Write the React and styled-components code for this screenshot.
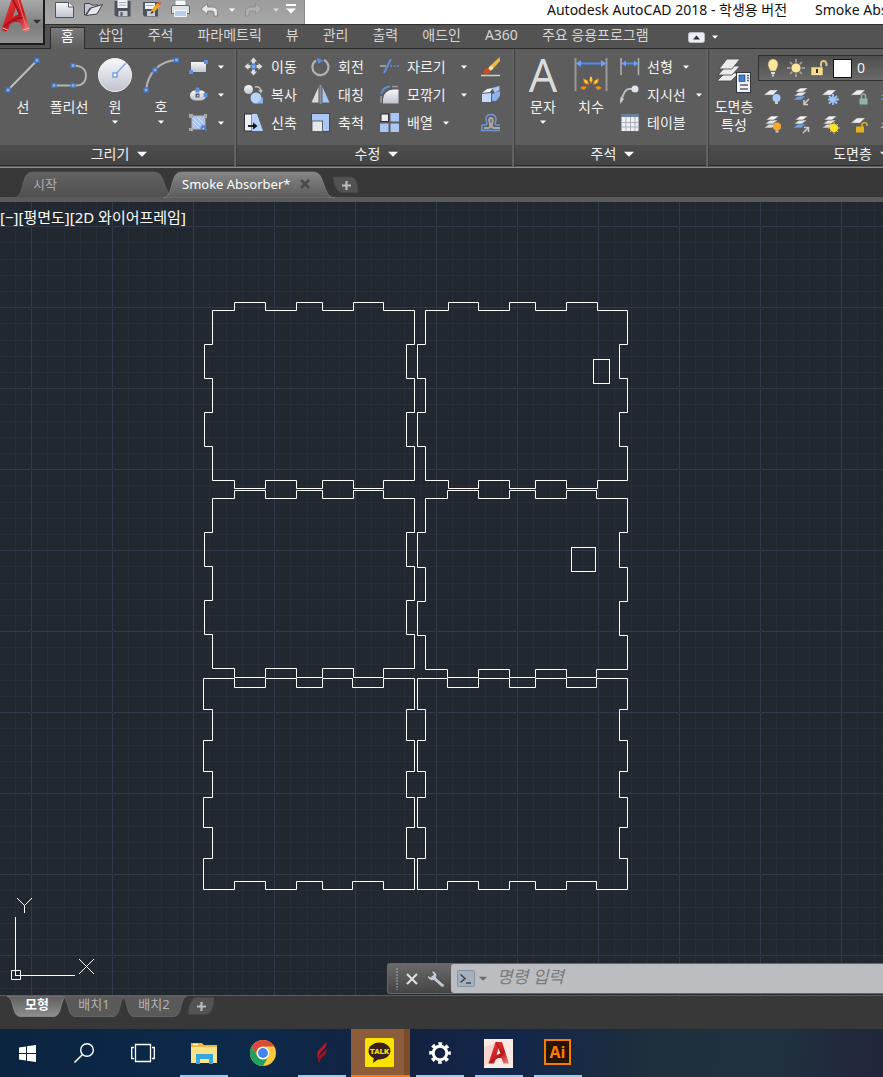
import React from "react";
import styled, { createGlobalStyle, css } from "styled-components";

const GlobalStyle = createGlobalStyle`
  *, *::before, *::after { box-sizing: border-box; }
  body {
    margin: 0;
    background: #383838;
    font-family: "Noto Sans", "Noto Sans CJK KR", sans-serif;
    font-size: 14px;
    line-height: 18px;
    color: #f2f2f2;
  }
  button, input, select { font: inherit; color: inherit; margin: 0; }
  button { border: 0; padding: 0; background: none; white-space: nowrap; }
  svg { display: block; flex: none; }
`;

const App = styled.div`
  display: flex;
  flex-direction: column;
  min-height: 100vh;
  overflow: hidden;
`;

/* ---------- header ---------- */

const Header = styled.header`
  display: flex;
  align-items: flex-start;
  height: 49px;
  background: #535353;
  border-bottom: 1px solid #2b2b2b;
`;

const AppButton = styled.button`
  flex: none;
  display: flex;
  align-items: center;
  width: 45px;
  height: 45px;
  background: linear-gradient(#a9a9a9, #7d7d7d 60%, #929292);
  border: solid #1c1c1c;
  border-width: 0 2px 2px 0;
`;

const HeaderMain = styled.div`
  flex: 1;
  min-width: 0;
`;

const TitleBar = styled.div`
  display: flex;
  height: 25px;
  background: #fff;
  border-bottom: 1px solid #2f2f2f;
  overflow: hidden;
`;

const QuickAccess = styled.div`
  flex: none;
  display: flex;
  align-items: flex-start;
  width: 260px;
  padding-left: 10px;
  gap: 9px;
  background: linear-gradient(#9c9c9c, #a8a8a8);
  border-right: 1px solid #8a8a8a;
`;

const QuickButton = styled.button`
  width: ${(p) => (p.$narrow ? 6 : 20)}px;
  height: 20px;
  display: flex;
  align-items: center;
  justify-content: center;
`;

const Caption = styled.h1`
  display: flex;
  gap: 28px;
  margin: 0;
  padding-left: 242px;
  font-size: 14px;
  font-weight: 400;
  line-height: 20px;
  color: #111;
  white-space: nowrap;
`;

const RibbonTabs = styled.nav`
  display: flex;
  align-items: flex-start;
  height: 24px;
  padding: 2px 0 0 5px;
`;

const RibbonTab = styled.button`
  height: 22px;
  padding: 0 12px 7px;
  line-height: 15px;
  color: #d6d6d6;
  ${(p) =>
    p.$active &&
    css`
      padding: 0 10px 7px;
      margin-right: 1px;
      color: #fff;
      background: linear-gradient(#7b7b7b, #5d5d5d);
      border: solid #2b2b2b;
      border-width: 1px 1px 0;
    `}
`;

const RibbonToggle = styled.button`
  display: flex;
  align-items: center;
  gap: 7px;
  height: 20px;
  margin-left: 27px;
`;

/* ---------- ribbon ---------- */

const Ribbon = styled.div`
  display: flex;
  height: 119px;
  background: #5d5d5d;
  border-bottom: 1px solid #8b8b8b;
  overflow: hidden;
`;

const Panel = styled.section`
  flex: none;
  display: flex;
  flex-direction: column;
  width: ${(p) => p.$width}px;
  border-right: 1px solid #3c3c3c;
  box-shadow: inset -1px 0 #6b6b6b;
`;

const PanelBody = styled.div`
  display: flex;
  height: 96px;
  padding: 4px 0 0 ${(p) => p.$inset || 0}px;
`;

const PanelTitle = styled.button`
  display: flex;
  align-items: center;
  justify-content: center;
  gap: 8px;
  height: 21px;
  margin-right: 2px;
  padding: 0 0 2px 4px;
  background: linear-gradient(#4d4d4d, #434343);
  border-bottom: 1px solid #2c2c2c;
`;

const BigTool = styled.button`
  display: flex;
  flex-direction: column;
  align-items: center;
  width: ${(p) => p.$width || 46}px;
  height: 88px;
  padding-top: 4px;
  line-height: 18px;
`;

const BigIcon = styled.span`
  height: 41px;
`;

const BigLetter = styled.span`
  display: block;
  font-family: "Open Sans", sans-serif;
  font-size: 45px;
  line-height: 35px;
  color: #dcdcdc;
`;

const BigArrow = styled.span`
  margin-top: 4px;
`;

const ToolColumn = styled.div`
  flex: none;
  width: ${(p) => p.$width || 60}px;
  margin-left: ${(p) => p.$gap || 0}px;
`;

const Tool = styled.button`
  display: flex;
  align-items: center;
  height: ${(p) => p.$height || 28}px;
`;

const ToolLabel = styled.span`
  min-width: ${(p) => (p.$wide ? 44 : 26)}px;
  margin: 0 10px 0 7px;
  text-align: left;
`;

const ArrowGap = styled.span`
  padding-left: 9px;
`;

const LayerArea = styled.div`
  padding-top: 2px;
`;

const LayerCombo = styled.div`
  display: flex;
  align-items: center;
  gap: 5px;
  width: 210px;
  height: 26px;
  padding-left: 5px;
  background: linear-gradient(#4e4e4e, #6a6a6a);
  border: 1px solid #303030;
`;

const Swatch = styled.span`
  width: 19px;
  height: 19px;
  background: #fff;
  border: 1px solid #111;
`;

const LayerSelect = styled.select`
  flex: 1;
  appearance: none;
  background: none;
  border: 0;
  padding: 0;
`;

const LayerRow = styled.div`
  display: flex;
  gap: 9px;
  height: 28px;
  align-items: center;
  padding: 3px 0 0 5px;
`;

/* ---------- file tabs ---------- */

const FileTabs = styled.nav`
  display: flex;
  height: 34px;
  padding: 3px 0 0 14px;
  background: #383838;
  border-bottom: 5px solid #5b5b5b;
`;

const FileTab = styled.button`
  position: relative;
  display: flex;
  align-items: center;
  width: ${(p) => p.$width}px;
  height: 27px;
  margin-right: -13px;
  padding: 0 0 1px 19px;
  gap: 10px;
  font-size: 13px;
  color: ${(p) => (p.$active ? "#fff" : "#ababab")};
`;

const Shape = styled.svg`
  position: absolute;
  inset: 0;
  width: 100%;
  height: 100%;
`;

const Front = styled.span`
  position: relative;
`;

const AddTab = styled.button`
  display: flex;
  align-self: flex-start;
  margin: ${(p) => p.$margin};
`;

/* ---------- drawing area ---------- */

const Viewport = styled.main`
  position: relative;
  flex: 1;
  min-height: 700px;
  background: #212830;
  overflow: hidden;
`;

const Drawing = styled.svg`
  position: absolute;
  inset: 0;
  width: 100%;
  height: 100%;
`;

const ViewLabel = styled.div`
  position: relative;
  display: flex;
  padding-top: 6px;
  font-size: 15px;
  color: #fff;
  white-space: nowrap;
`;

const ViewControl = styled.button`
  height: 18px;
  line-height: 18px;
`;

const Ucs = styled.svg`
  position: absolute;
  left: 0;
  bottom: 14px;
`;

const CommandBar = styled.form`
  position: absolute;
  left: 387px;
  right: 0;
  bottom: 1px;
  display: flex;
  height: 31px;
  border: 1px solid #66686a;
  border-right: 0;
  border-radius: 3px 0 0 3px;
  background: linear-gradient(#6a6a6a, #444);
`;

const CommandHandle = styled.div`
  flex: none;
  display: flex;
  align-items: center;
  gap: 4px;
  width: 63px;
  padding-left: 8px;
`;

const CommandBody = styled.div`
  flex: 1;
  display: flex;
  align-items: center;
  padding-left: 6px;
  background: #bcbdc0;
  border-radius: 3px 0 0 3px;
`;

const CommandMenu = styled.button`
  display: flex;
  align-items: center;
  gap: 4px;
`;

const CommandInput = styled.input`
  flex: 1;
  min-width: 0;
  height: 26px;
  margin-left: 10px;
  padding: 0 0 4px;
  border: 0;
  background: none;
  font-size: 17px;
  font-style: italic;
  color: #222;
  &::placeholder { color: #7a7a7c; opacity: 1; }
`;

/* ---------- layout tabs ---------- */

const LayoutTabs = styled.nav`
  display: flex;
  height: 34px;
  padding-left: 7px;
  background: #383838;
  border-top: 1px solid #5e5e5e;
`;

const LayoutTab = styled.button`
  position: relative;
  width: ${(p) => p.$width}px;
  height: 21px;
  margin-right: -5px;
  padding-bottom: 4px;
  line-height: 17px;
  font-size: 13px;
  font-weight: ${(p) => (p.$active ? 700 : 400)};
  color: ${(p) => (p.$active ? "#fff" : "#b4b4b4")};
`;

/* ---------- taskbar ---------- */

const Taskbar = styled.footer`
  display: flex;
  height: 48px;
  background: linear-gradient(100deg, #0b2440 0%, #0c2a4b 28%, #14213f 45%, #12264a 58%, #1f2f3c 74%, #20303f 88%, #22253a 100%);
`;

const TaskButton = styled.button`
  display: flex;
  align-items: center;
  justify-content: center;
  width: ${(p) => p.$width || 59}px;
  height: 48px;
  margin-left: ${(p) => p.$gap || 0}px;
  ${(p) =>
    p.$running &&
    css`
      background: linear-gradient(#9ccbf2, #9ccbf2) center bottom / 48px 2px no-repeat;
    `}
  ${(p) =>
    p.$alert &&
    css`
      background: linear-gradient(90deg, #8d5d3b 53px, #7b4b2a 53px);
      border-bottom: 2px solid #ff7a0a;
      padding-right: 2px;
    `}
`;

/* ---------- glyphs ---------- */

const Caret = ({ w = 6, fill = "#fff" }) => (
  <svg width={w} height={w / 2 + 1} viewBox="0 0 6 4" preserveAspectRatio="none" aria-hidden="true">
    <path d="M0 .5H6L3 3.8Z" fill={fill} />
  </svg>
);

const Svg = ({ w = 20, h = 20, children }) => (
  <svg width={w} height={h} viewBox={`0 0 ${w} ${h}`} fill="none" aria-hidden="true">
    {children}
  </svg>
);

const Grip = ({ x, y, s = 4 }) => (
  <rect x={x - s / 2} y={y - s / 2} width={s} height={s} fill="#8fb0e8" stroke="#3f74c4" strokeWidth="1.4" />
);

const Defs = () => (
  <svg width="0" height="0" style={{ position: "absolute" }} aria-hidden="true">
    <defs>
      <linearGradient id="silver" x1="0" y1="0" x2="0" y2="1">
        <stop offset="0" stopColor="#f8f8fa" />
        <stop offset="1" stopColor="#bfc3cf" />
      </linearGradient>
      <linearGradient id="red" x1="0" y1="0" x2="1" y2="1">
        <stop offset="0" stopColor="#ee4444" />
        <stop offset=".6" stopColor="#c4161f" />
        <stop offset="1" stopColor="#e98a84" />
      </linearGradient>
      <linearGradient id="tabOn" x1="0" y1="0" x2="0" y2="1">
        <stop offset="0" stopColor="#868686" />
        <stop offset="1" stopColor="#5b5b5b" />
      </linearGradient>
      <linearGradient id="tabOff" x1="0" y1="0" x2="0" y2="1">
        <stop offset="0" stopColor="#626262" />
        <stop offset="1" stopColor="#505050" />
      </linearGradient>
      <linearGradient id="tabOnDown" x1="0" y1="0" x2="0" y2="1">
        <stop offset="0" stopColor="#5e5e5e" />
        <stop offset="1" stopColor="#8e8e8e" />
      </linearGradient>
    </defs>
  </svg>
);

const AutocadLogo = () => (
  <Svg w={33} h={44}>
    <path d="M12 -2H20L29.500 28C30 31.500 24 32.500 22.500 30L20 23C16 21 12 22 9.500 25L8 30C7 32.500 1.500 31.500 2 28Z" fill="url(#red)" />
    <path d="M16 7L18.500 14.500C16 15 13.500 16 12.500 18Z" fill="#8e8b8c" />
    <path d="M13 0L20 15M4 27C10 20 18 17 24 18" stroke="#9d1016" strokeWidth="1.500" />
    <path d="M18 0L26.500 28" stroke="#f4766f" />
    <path d="M2.500 28L8 30M23 30L29 28" stroke="#f3b4ae" />
  </Svg>
);

/* quick access icons */
const NewIcon = () => (
  <Svg><path d="M.5 2.500H14L18.500 7V17.500H.5Z" fill="url(#silver)" stroke="#50535a" /><path d="M13.500 2.500V7H18.500" fill="#fff" stroke="#50535a" /></Svg>
);
const OpenIcon = () => (
  <Svg><path d="M.5 15V3.500H6L8 5H14V8H6L1.500 15Z" fill="#c2c6ce" stroke="#3f434b" /><path d="M7 8L18.500 4.500L13 14L2 15.500Z" fill="#e4e8ee" stroke="#3f434b" /></Svg>
);
const SaveIcon = () => (
  <Svg><path d="M1.500 1H17.500V16.500H3L1.500 15Z" fill="#4d535e" /><path d="M4.500 0H14.500V8H4.500Z" fill="#eef1f5" /><path d="M6 2.500H13M6 5H13" stroke="#a4a9b2" /><path d="M5.500 11H14.500V16H5.500Z" fill="#c8ccd4" /><path d="M7.500 12H9.500V16H7.500Z" fill="#4d535e" /></Svg>
);
const SaveAsIcon = () => (
  <Svg><path d="M1 2H16V16.500H2.500L1 15Z" fill="#4d535e" /><path d="M3 3H13V9H3Z" fill="#eef1f5" /><path d="M4 5.500H12" stroke="#a4a9b2" /><path d="M5 11H13V16H5Z" fill="#c8ccd4" /><path d="M10 12L17 4" stroke="#f2a81d" strokeWidth="3.500" /><path d="M16.500 4.500L18.500 2" stroke="#e4604a" strokeWidth="3" /><path d="M8.500 14L10 11L11.500 12.500Z" fill="#222" /></Svg>
);
const PrintIcon = () => (
  <Svg><path d="M4 0H15V7H4Z" fill="#f6f7f9" stroke="#8c9099" /><path d="M.5 7Q.5 5.500 2 5.500H17Q18.500 5.500 18.500 7V13.500H.5Z" fill="#dfe2e8" stroke="#63676f" /><path d="M3.500 10.500H15.500V16.500H3.500Z" fill="#b7cef0" stroke="#f4f6f8" /></Svg>
);
const UndoIcon = () => (
  <Svg><path d="M1 9L7.500 3.500V7H12Q17.500 7 17.500 12V16H14V13Q14 11 12 11H7.500V14.500Z" fill="#e6e6e6" stroke="#777" strokeWidth=".8" /></Svg>
);
const RedoIcon = () => (
  <Svg><path d="M18 9L11.500 3.500V7H7Q1.500 7 1.500 12V16H5V13Q5 11 7 11H11.500V14.500Z" fill="#b0b0b0" stroke="#8a8a8a" strokeWidth=".8" /></Svg>
);
const CustomizeIcon = () => (
  <Svg w={10} h={14}><path d="M0 2H10" stroke="#fff" strokeWidth="2" /><path d="M0 5.500H10L5 10.500Z" fill="#fff" /></Svg>
);
const ToggleIcon = () => (
  <Svg w={17} h={11}><rect x=".5" y=".5" width="16" height="10" rx="2" fill="#eceef2" stroke="#b9bcc4" /><path d="M5 7.500L8.500 3.500L12 7.500Z" fill="#2e3036" /></Svg>
);

/* draw panel icons */
const LineIcon = () => (
  <Svg w={36} h={36}><path d="M3 33L32 3.500" stroke="#bdbdbd" strokeWidth="2" /><Grip x={3} y={33} /><Grip x={32} y={3.500} /></Svg>
);
const PolylineIcon = () => (
  <Svg w={36} h={36}><path d="M3 28.500H25C32 28.500 35 24 35 18.500S31 8.500 22 8.500" stroke="#b4b4b4" strokeWidth="2" /><Grip x={3} y={28.500} /><Grip x={22} y={28.500} /><Grip x={22} y={8.500} /></Svg>
);
const CircleIcon = () => (
  <Svg w={36} h={36}><circle cx="18" cy="18" r="16.500" fill="url(#silver)" stroke="#eceef2" /><path d="M18 18L29 6" stroke="#80acf0" strokeWidth="1.600" /><rect x="16" y="16" width="4" height="4" fill="#fff" stroke="#6f9fea" strokeWidth="1.400" /></Svg>
);
const ArcIcon = () => (
  <Svg w={36} h={36}><path d="M3 33C5 16 16 4 34 3" stroke="#b4b4b4" strokeWidth="2" /><Grip x={3} y={33} /><Grip x={12} y={13} /><Grip x={33.500} y={3} /></Svg>
);
const RectIcon = () => (
  <Svg><rect x="2" y="5" width="15" height="10" fill="url(#silver)" /><rect x="0" y="13" width="4" height="4" fill="#5c8fdf" /><rect x="15" y="3" width="4" height="4" fill="#5c8fdf" /></Svg>
);
const EllipseIcon = () => (
  <Svg><rect x="1" y="5.500" width="16" height="10" rx="5" fill="url(#silver)" /><rect x="6.500" y="2.500" width="4" height="5" fill="#5c8fdf" /><rect x="14.500" y="8" width="4" height="4" fill="#5c8fdf" /><rect x="6.500" y="8.500" width="4" height="4" fill="#5a5d65" /><rect x="8" y="10" width="1.500" height="1.500" fill="#cfd3da" /></Svg>
);
const HatchIcon = () => (
  <Svg><rect x="3" y="3" width="13" height="13" fill="#a9c4f2" stroke="#b8b8b8" /><path d="M4 9L10 15M4 5L15 16M8 4L16 12" stroke="#d3e1f9" /><path d="M0 1H4V5H0ZM15 1H18V5H15ZM0 15H4V18H0Z" fill="#a9a9a9" /><path d="M11 17L16 12M13 12L17.500 17.500M11.500 14H17" stroke="#4f88dd" strokeWidth="1.500" /></Svg>
);

/* modify panel icons */
const MoveIcon = () => (
  <Svg><path d="M9.500 .5L13 4.500H11V6.500H8V4.500H6ZM9.500 18.500L13 14.500H11V12.500H8V14.500H6ZM.5 9.500L4.500 6V8H6.500V11H4.500V13ZM18.500 9.500L14.500 6V8H12.500V11H14.500V13Z" fill="#dcdcde" /><rect x="7.500" y="7.500" width="4" height="4" fill="#7fa9ea" stroke="#4a80d2" /></Svg>
);
const RotateIcon = () => (
  <Svg><path d="M5 3.500A8 8 0 1 0 13 3" stroke="#b0b2b6" strokeWidth="2.200" /><path d="M6 .5L12 3.500L7 7Z" fill="#5c8fdf" /></Svg>
);
const TrimIcon = () => (
  <Svg><path d="M0 9H6" stroke="#9a9a9a" strokeWidth="2" /><path d="M4 16L11 2" stroke="#5c8fdf" strokeWidth="2" /><path d="M10 9H19" stroke="#5c8fdf" strokeDasharray="2 1.500" strokeWidth="1.500" /></Svg>
);
const EraseIcon = () => (
  <Svg><path d="M18.500 0L8 10L11 13L19 4Z" fill="#e9b949" /><path d="M10 8.500L7 11.500L9.500 14L12.500 11Z" fill="#f3e3b0" /><path d="M2 17Q3 10.500 7 11L9.500 14Q8 18 2 17Z" fill="#d2491b" /><path d="M0 18.500H19" stroke="#cfcfcf" strokeWidth="1.500" /></Svg>
);
const CopyIcon = () => (
  <Svg><circle cx="4.500" cy="4.500" r="4.500" fill="url(#silver)" /><circle cx="12" cy="13" r="5.500" fill="#b9d2f8" /><path d="M13 18.500H19V12Z" fill="#8cb2ee" /><path d="M11 2Q16 1 17 6" stroke="#bcbcbc" strokeWidth="1.500" /><path d="M14 5H19L17 8.500Z" fill="#bcbcbc" /></Svg>
);
const MirrorIcon = () => (
  <Svg><path d="M7.500 2V17.500H.5Z" fill="#d9dadd" /><path d="M11.500 2V17.500H18.500Z" fill="#a8c8f4" /><path d="M9.500 0V19" stroke="#8e9095" strokeWidth="2" /></Svg>
);
const FilletIcon = () => (
  <Svg><path d="M3 18.500V14Q4 5 14 4.500H18.500V18.500Z" fill="url(#silver)" /><path d="M1 9Q3 2 10 1.500" stroke="#5c8fdf" strokeWidth="2" /><path d="M1 11V18M12 1.500H18" stroke="#9a9a9a" strokeWidth="1.500" /></Svg>
);
const ExplodeIcon = () => (
  <Svg><path d="M1 9L10 8V17H1Z" fill="#c4d9fa" /><path d="M1 8L6 4L12 3L9 7Z" fill="#eef3fb" /><path d="M11 3L18.500 1V5L14 8Z" fill="#a8c6f3" /><path d="M11 9L19 6V11L15 16H11Z" fill="#8cb2ee" /></Svg>
);
const StretchIcon = () => (
  <Svg><path d="M.5 1H8V18H.5Z" fill="#eef0f4" stroke="#2d3138" /><path d="M8 1H13L19 18H8Z" fill="#b6d2fa" /><path d="M4 13H10" stroke="#111" strokeWidth="1.800" /><path d="M9 9.500L13.500 13L9 16.500Z" fill="#111" /></Svg>
);
const ScaleIcon = () => (
  <Svg><rect x=".5" y=".5" width="18" height="18" fill="#a9c6f4" stroke="#3d4a66" /><rect x="1" y="8" width="10.500" height="10.500" fill="#e6e8ec" stroke="#5a616d" /></Svg>
);
const ArrayIcon = () => (
  <Svg><rect x="1" y="1" width="7.500" height="7.500" fill="#eceef2" stroke="#333" /><rect x="10.500" y="0" width="8.500" height="8.500" fill="#a9c6f4" /><rect x="0" y="10.500" width="8.500" height="8.500" fill="#a9c6f4" /><rect x="10.500" y="10.500" width="8.500" height="8.500" fill="#a9c6f4" /></Svg>
);
const OffsetIcon = () => (
  <Svg><path d="M1 12H4Q7 12 5.500 9Q3.500 1.500 10 1.500T14.500 9Q13 12 16 12H19" stroke="#6f97d8" strokeWidth="1.500" /><path d="M.800 12V17.500H19" stroke="#6f97d8" strokeWidth="1.500" /><path d="M3 15H7Q10 15 9 11Q7 5 10 5T11 11Q10 15 13 15H19" stroke="#a9a9a9" strokeWidth="2" /></Svg>
);

/* annotation icons */
const DimensionIcon = () => (
  <Svg w={36} h={36}>
    <path d="M2.500 1V34M33.500 1V34" stroke="#999" strokeWidth="2" />
    <path d="M4 6.500H32" stroke="#4b8df2" strokeWidth="2" />
    <path d="M3 6.500L8 3V10ZM33 6.500L28 3V10Z" fill="#6aa2f8" />
    <g fill="#f08c14">
      <path d="M18 19L20 23L18 27L16 23ZM10 21L15 24L16 28L11 26ZM26 21L21 24L20 28L25 26ZM7 31L10 29L14 30L11 33ZM29 31L26 29L22 30L25 33Z" />
    </g>
    <path d="M18 20V24M12 23L14 26M24 23L22 26" stroke="#ffe04a" strokeWidth="1.500" />
  </Svg>
);
const LinearIcon = () => (
  <Svg><path d="M1 1V18M18.500 1V18" stroke="#b4b4b4" strokeWidth="1.500" /><path d="M2 6.500H17" stroke="#4b8df2" strokeWidth="2" /><path d="M2 6.500L6 3.500V9.500ZM18 6.500L14 3.500V9.500Z" fill="#6aa2f8" /></Svg>
);
const LeaderIcon = () => (
  <Svg><path d="M1 17Q4 4 9 4H12" stroke="#bdbdbd" strokeWidth="2" /><path d="M0 19L.5 12L4 14Z" fill="#cfcfcf" /><circle cx="15" cy="4" r="3.500" fill="#dfe5ee" /></Svg>
);
const TableIcon = () => (
  <Svg><rect x="1" y="1" width="18" height="17.500" fill="#eef0f3" stroke="#5e636d" /><path d="M1 1H19V4H1Z" fill="#6d7f9c" /><path d="M6 4V18M10.500 4V18M15 4V18M1 9.500H19M1 14H19" stroke="#a9adb5" /></Svg>
);

/* layer icons */
const LayerSheets = ({ blue }) => (
  <g stroke="#5b5b5b" strokeWidth=".6">
    <path d="M1 13L6 9H14L9 13Z" fill={blue ? "#6f9fea" : "#dadada"} />
    <path d="M2 9L7 5H15L10 9Z" fill="#e6e6e6" />
    <path d="M3 5L8 1H16L11 5Z" fill="#f4f4f4" />
  </g>
);
const LayerPropsIcon = () => (
  <Svg w={36} h={36}>
    <g fill="#ececec" stroke="#444" strokeWidth=".8">
      <path d="M1 24L9 16H23L15 24Z" /><path d="M2 18L10 9H24L16 18Z" /><path d="M3 12L11 2H24L16 12Z" />
    </g>
    <rect x="20.500" y="15.500" width="14" height="20" fill="#f1f2f5" stroke="#33363d" />
    <rect x="23" y="18" width="6" height="6.500" fill="#3b7fe0" stroke="#223344" strokeWidth=".6" />
    <path d="M31 18.500H33M31 21H33M31 23.500H33M24 28H32M24 32H32" stroke="#5b606b" strokeWidth="1.300" />
  </Svg>
);
const SheetIcon = ({ children, many, blue }) => (
  <Svg>
    {many ? <LayerSheets blue={blue} /> : <path d="M1 8L7 3H15L10 8Z" fill="#efefef" stroke="#777" strokeWidth=".5" />}
    {children}
  </Svg>
);
const BulbIcon = () => (
  <Svg w={18} h={20}><path d="M9 1A5 5.500 0 0 1 14 6.500Q14 9 11.500 13H6.500Q4 9 4 6.500A5 5.500 0 0 1 9 1Z" fill="#fbe7a0" stroke="#8f8252" strokeWidth=".5" /><path d="M7 15H11M8 17.500H10" stroke="#d9d9dc" strokeWidth="2" /></Svg>
);
const SunIcon = () => (
  <Svg w={18} h={20}><path d="M9 1V19M0 10H18M3 4L15 16M15 4L3 16" stroke="#aaa89f" strokeWidth="1.500" /><circle cx="9" cy="10" r="5" fill="#fbe7a0" stroke="#555" strokeWidth=".8" /></Svg>
);
const UnlockIcon = () => (
  <Svg w={18} h={20}><path d="M11 10V6Q11 3 13.500 3T16.500 6V8" stroke="#d9c88f" strokeWidth="2" /><rect x="1" y="9" width="12" height="8.500" fill="#f3dc94" stroke="#6b5f37" strokeWidth=".6" /><path d="M7 11V15" stroke="#3a3421" strokeWidth="2" /></Svg>
);
const PadLock = ({ fill }) => (
  <g><path d="M11.500 12V9Q11.500 7 13.500 7T15.500 9V12" stroke={fill} strokeWidth="1.500" /><rect x="9.500" y="11.500" width="8" height="6" fill={fill} /></g>
);

/* ---------- window content ---------- */

const PlusTab = ({ down }) => (
  <svg width="28" height="18" viewBox="0 0 28 18" fill="none" aria-hidden="true">
    <path d={down ? "M8 .5H27Q27 17.500 18 17.500H1Q2 4 8 .5Z" : "M1 1H18C25 1 26 9 26 16.500H11C4 16.500 2 8 1 1Z"} fill="#535353" stroke="#474747" />
    <path d="M14.500 5V14M10 9.500H19" stroke="#bcbcbc" strokeWidth="2.200" />
  </svg>
);

const FileTabShape = ({ width, active }) => (
  <Shape viewBox={`0 0 ${width} 27`} preserveAspectRatio="none" aria-hidden="true">
    <path
      d={`M0 27C6 26 7 20 9 13C11 5 13 1 19 1H${width - 22}C${width - 15} 1 ${width - 14} 6 ${width - 11} 14C${width - 8} 22 ${width - 7} 26 ${width} 27Z`}
      fill={active ? "url(#tabOn)" : "url(#tabOff)"}
      stroke={active ? "#8b8b8b" : "#666"}
      strokeWidth=".6"
    />
  </Shape>
);

const LayoutTabShape = ({ width, active }) => (
  <Shape viewBox={`0 0 ${width} 21`} preserveAspectRatio="none" aria-hidden="true">
    <path
      d={`M0 0C5 2 5 8 7 14Q9 20.500 13 20.500H${width - 13}Q${width - 9} 20.500 ${width - 7} 14C${width - 5} 8 ${width - 5} 2 ${width} 0Z`}
      fill={active ? "url(#tabOnDown)" : "#595959"}
      stroke={active ? "#8c8c8c" : "#6a6a6a"}
      strokeWidth=".8"
    />
  </Shape>
);

const ribbonTabs = ["홈", "삽입", "주석", "파라메트릭", "뷰", "관리", "출력", "애드인", "A360", "주요 응용프로그램"];

const modifyColumns = [
  { width: 67, tools: [["이동", MoveIcon], ["복사", CopyIcon], ["신축", StretchIcon]] },
  { width: 69, tools: [["회전", RotateIcon], ["대칭", MirrorIcon], ["축척", ScaleIcon]] },
  { width: 101, tools: [["자르기", TrimIcon, "wide"], ["모깎기", FilletIcon, "wide"], ["배열", ArrayIcon, "menu"]] },
];

const layerRows = [
  [
    ["끄기", <SheetIcon key="i"><circle cx="13.500" cy="11" r="4" fill="#a9cdfb" /><path d="M12 16H15" stroke="#ccc" strokeWidth="2" /></SheetIcon>],
    ["분리", <SheetIcon key="i" many blue><path d="M17 12L12 17M12 13V17.500H16" stroke="#ccc" strokeWidth="1.500" /></SheetIcon>],
    ["동결", <SheetIcon key="i"><path d="M12 7V18M7 12.500H18M8 9L16 16.500M16 9L8 16.500" stroke="#9fc6fb" strokeWidth="1.800" /></SheetIcon>],
    ["잠금", <SheetIcon key="i"><PadLock fill="#8fb3a8" /></SheetIcon>],
    ["현재로 설정", <SheetIcon key="i" many blue />],
  ],
  [
    ["켜기", <SheetIcon key="i" many><circle cx="14" cy="11.500" r="4" fill="#f8a92a" /><path d="M12.500 16.500H15.500" stroke="#ccc" strokeWidth="2" /></SheetIcon>],
    ["분리 해제", <SheetIcon key="i" many blue><path d="M11 18L16 13M12 12.500H16.500V17" stroke="#ccc" strokeWidth="1.500" /></SheetIcon>],
    ["동결 해제", <SheetIcon key="i" many><path d="M13 7V19M7 13H19M9 9L17 17M17 9L9 17" stroke="#e8d25a" /><circle cx="13" cy="13" r="4" fill="#fbe51e" /></SheetIcon>],
    ["잠금 해제", <SheetIcon key="i"><path d="M12 12V9Q14.500 6 17 9V11" stroke="#e2b21c" strokeWidth="1.500" /><rect x="6" y="11.500" width="8" height="6" fill="#e2b21c" /></SheetIcon>],
    ["일치", <SheetIcon key="i" many />],
  ],
];

/* Finger-jointed box sides: a list of corner positions walked clockwise. */
const sidePanel = (x, y, tx, ty, ox, oy) => {
  const [l, r] = x;
  const [t, b] = y;
  const d = [`M${l} ${t}`];
  tx.forEach((v, i) => d.push(`H${v}V${i % 2 ? t : oy[0]}`));
  d.push(`H${r}`);
  ty.forEach((v, i) => d.push(`V${v}H${i % 2 ? r : ox[1]}`));
  d.push(`V${b}`);
  [...tx].reverse().forEach((v, i) => d.push(`H${v}V${i % 2 ? b : oy[1]}`));
  d.push(`H${l}`);
  [...ty].reverse().forEach((v, i) => d.push(`V${v}H${i % 2 ? l : ox[0]}`));
  return d.join("") + "Z";
};

const outlines = [
  sidePanel([212, 414], [108, 278], [234, 265, 296, 322, 353, 383], [142, 176, 210, 244], [204, 406], [100, 286]),
  sidePanel([425, 627], [108, 278], [448, 478, 509, 535, 566, 597], [142, 176, 210, 244], [417, 619], [100, 286]),
  sidePanel([212, 414], [296, 466], [234, 265, 296, 322, 353, 383], [330, 364, 398, 432], [204, 406], [288, 475]),
  sidePanel([425, 627], [296, 467], [447, 478, 509, 535, 566, 596], [330, 365, 399, 433], [417, 619], [288, 475]),
  sidePanel([203, 414], [476, 687], [234, 265, 296, 322, 352, 383], [507, 538, 569, 595, 625, 656], [212, 406], [485, 679]),
  sidePanel([417, 627], [476, 687], [447, 478, 509, 535, 566, 596], [507, 538, 569, 595, 625, 656], [425, 619], [485, 679]),
];

const minor = [16, 33, 49, 65];

const ModelSpace = () => (
  <Drawing role="img" aria-label="Smoke Absorber">
    <defs>
      <pattern id="grid" x="31" y="24" width="81" height="81" patternUnits="userSpaceOnUse">
        {minor.map((m) => (
          <path key={m} d={`M${m} 0h1v81h-1zM0 ${m}h81v1H0z`} fill="#272e3a" />
        ))}
        <path d="M0 0H81V1H0zM0 0V81H1V0z" fill="#32394b" />
      </pattern>
    </defs>
    <rect width="100%" height="100%" fill="url(#grid)" />
    <g transform="translate(.5 .5)" fill="none" stroke="#fff">
      {outlines.map((d) => (
        <path key={d} d={d} />
      ))}
      <rect x="593" y="157" width="16" height="24" />
      <rect x="571" y="345" width="24" height="24" />
    </g>
  </Drawing>
);

const Task = ({ label, children, ...rest }) => (
  <TaskButton type="button" aria-label={label} {...rest}>{children}</TaskButton>
);

export default function AutocadWindow() {
  return (
    <App>
      <GlobalStyle />
      <Defs />
      <Header>
        <AppButton type="button" aria-label="응용프로그램 메뉴">
          <AutocadLogo />
          <Caret w={8} fill="#2d3038" />
        </AppButton>
        <HeaderMain>
          <TitleBar>
            <QuickAccess>
              <QuickButton aria-label="새로 만들기"><NewIcon /></QuickButton>
              <QuickButton aria-label="열기"><OpenIcon /></QuickButton>
              <QuickButton aria-label="저장"><SaveIcon /></QuickButton>
              <QuickButton aria-label="다른 이름으로 저장"><SaveAsIcon /></QuickButton>
              <QuickButton aria-label="플롯"><PrintIcon /></QuickButton>
              <QuickButton aria-label="명령 취소"><UndoIcon /></QuickButton>
              <QuickButton $narrow aria-label="명령 취소 목록"><Caret /></QuickButton>
              <QuickButton aria-label="명령 복구"><RedoIcon /></QuickButton>
              <QuickButton $narrow aria-label="명령 복구 목록"><Caret fill="#dcdcdc" /></QuickButton>
              <QuickButton $narrow aria-label="사용자화"><CustomizeIcon /></QuickButton>
            </QuickAccess>
            <Caption>
              <span>Autodesk AutoCAD 2018 - 학생용 버전</span>
              <span>Smoke Absorber.dwg</span>
            </Caption>
          </TitleBar>
          <RibbonTabs>
            {ribbonTabs.map((t, i) => (
              <RibbonTab key={t} type="button" $active={i === 0}>{t}</RibbonTab>
            ))}
            <RibbonToggle type="button" aria-label="리본 최소화"><ToggleIcon /><Caret /></RibbonToggle>
          </RibbonTabs>
        </HeaderMain>
      </Header>

      <Ribbon>
        <Panel $width={237}>
          <PanelBody>
            <BigTool type="button"><BigIcon><LineIcon /></BigIcon>선</BigTool>
            <BigTool type="button"><BigIcon><PolylineIcon /></BigIcon>폴리선</BigTool>
            <BigTool type="button"><BigIcon><CircleIcon /></BigIcon>원<BigArrow><Caret /></BigArrow></BigTool>
            <BigTool type="button"><BigIcon><ArcIcon /></BigIcon>호<BigArrow><Caret /></BigArrow></BigTool>
            <ToolColumn $gap={5} $width={44}>
              <Tool aria-label="직사각형"><RectIcon /><ArrowGap><Caret /></ArrowGap></Tool>
              <Tool aria-label="타원"><EllipseIcon /><ArrowGap><Caret /></ArrowGap></Tool>
              <Tool aria-label="해치"><HatchIcon /><ArrowGap><Caret /></ArrowGap></Tool>
            </ToolColumn>
          </PanelBody>
          <PanelTitle type="button">그리기<Caret w={10} /></PanelTitle>
        </Panel>

        <Panel $width={278}>
          <PanelBody $inset={7}>
            {modifyColumns.map((c) => (
              <ToolColumn key={c.width} $width={c.width}>
                {c.tools.map(([label, Icon, menu]) => (
                  <Tool key={label} type="button">
                    <Icon />
                    <ToolLabel $wide={menu === "wide"}>{label}</ToolLabel>
                    {menu && <Caret />}
                  </Tool>
                ))}
              </ToolColumn>
            ))}
            <ToolColumn $width={24}>
              <Tool aria-label="지우기"><EraseIcon /></Tool>
              <Tool aria-label="분해"><ExplodeIcon /></Tool>
              <Tool aria-label="간격띄우기"><OffsetIcon /></Tool>
            </ToolColumn>
          </PanelBody>
          <PanelTitle type="button">수정<Caret w={10} /></PanelTitle>
        </Panel>

        <Panel $width={194}>
          <PanelBody $inset={4}>
            <BigTool type="button" $width={48}><BigIcon><BigLetter aria-hidden="true">A</BigLetter></BigIcon>문자<BigArrow><Caret /></BigArrow></BigTool>
            <BigTool type="button" $width={48}><BigIcon><DimensionIcon /></BigIcon>치수</BigTool>
            <ToolColumn $gap={5} $width={88}>
              <Tool type="button"><LinearIcon /><ToolLabel>선형</ToolLabel><Caret /></Tool>
              <Tool type="button"><LeaderIcon /><ToolLabel>지시선</ToolLabel><Caret /></Tool>
              <Tool type="button"><TableIcon /><ToolLabel>테이블</ToolLabel></Tool>
            </ToolColumn>
          </PanelBody>
          <PanelTitle type="button">주석<Caret w={10} /></PanelTitle>
        </Panel>

        <Panel $width={304}>
          <PanelBody $inset={1}>
            <BigTool type="button" $width={48}><BigIcon><LayerPropsIcon /></BigIcon>도면층<br />특성</BigTool>
            <LayerArea>
              <LayerCombo>
                <BulbIcon /><SunIcon /><UnlockIcon /><Swatch />
                <LayerSelect aria-label="도면층" defaultValue="0"><option>0</option></LayerSelect>
              </LayerCombo>
              {layerRows.map((row, i) => (
                <LayerRow key={i}>
                  {row.map(([label, icon]) => (
                    <Tool key={label} type="button" aria-label={label} $height={20}>{icon}</Tool>
                  ))}
                </LayerRow>
              ))}
            </LayerArea>
          </PanelBody>
          <PanelTitle type="button">도면층<Caret w={10} /></PanelTitle>
        </Panel>
      </Ribbon>

      <FileTabs>
        <FileTab type="button" $width={162}>
          <FileTabShape width={162} />
          <Front>시작</Front>
        </FileTab>
        <FileTab type="button" $width={172} $active>
          <FileTabShape width={172} active />
          <Front>Smoke Absorber*</Front>
          <Front><Svg w={10} h={10}><path d="M1 1L9 9M9 1L1 9" stroke="#4a4a4a" strokeWidth="2.500" /></Svg></Front>
        </FileTab>
        <AddTab type="button" aria-label="새 도면" $margin="5px 0 0 10px"><PlusTab /></AddTab>
      </FileTabs>

      <Viewport>
        <ModelSpace />
        <ViewLabel>
          <ViewControl type="button">[−]</ViewControl>
          <ViewControl type="button">[평면도]</ViewControl>
          <ViewControl type="button">[2D 와이어프레임]</ViewControl>
        </ViewLabel>
        <Ucs width="100" height="90" viewBox="0 0 100 90" fill="none" stroke="#fff" aria-hidden="true">
          <path d="M15.500 26V84M15 84.500H75M11.500 79.500H20.500V88.500H11.500Z" />
          <path d="M17 7L24.500 14.500L32 7M24.500 14.500V22M79 68L94 83M94 68L79 83" />
        </Ucs>
        <CommandBar onSubmit={(e) => e.preventDefault()}>
          <CommandHandle>
            <Svg w={2} h={22}><path d="M1 0V22" stroke="#aaa" strokeDasharray="2 1" /></Svg>
            <button type="button" aria-label="닫기"><Svg w={20} h={20}><path d="M5 5L15 15M15 5L5 15" stroke="#dedede" strokeWidth="2.200" /></Svg></button>
            <button type="button" aria-label="사용자화">
              <Svg w={20} h={20}>
                <path d="M5 2A5 5 0 0 1 10.500 9L18.500 16Q18.500 19 15.500 18L8 11.500Q2 12.500 1 6L4.500 8L7.500 5.500Z" fill="#c3c9d2" stroke="#33373e" strokeWidth=".6" />
              </Svg>
            </button>
          </CommandHandle>
          <CommandBody>
            <CommandMenu type="button" aria-label="최근 명령">
              <Svg w={18} h={18}><rect x=".5" y=".5" width="17" height="16" rx="1" fill="#a6b0bc" stroke="#8791a0" /><path d="M3.500 4.500L8 8.500L3.500 12.500M9 13H14" stroke="#3f4854" strokeWidth="1.600" /></Svg>
              <Caret w={8} fill="#6b6b6b" />
            </CommandMenu>
            <CommandInput aria-label="명령 입력" placeholder="명령 입력" />
          </CommandBody>
        </CommandBar>
      </Viewport>

      <LayoutTabs>
        <LayoutTab type="button" $width={60} $active><LayoutTabShape width={60} active /><Front>모형</Front></LayoutTab>
        <LayoutTab type="button" $width={64}><LayoutTabShape width={64} /><Front>배치1</Front></LayoutTab>
        <LayoutTab type="button" $width={66}><LayoutTabShape width={66} /><Front>배치2</Front></LayoutTab>
        <AddTab type="button" aria-label="새 배치" $margin="1px 0 0 5px"><PlusTab down /></AddTab>
      </LayoutTabs>

      <Taskbar>
        <Task label="시작" $width={54}>
          <Svg w={17} h={17}><path d="M0 2.500L7 1.500V8H0ZM8 1.300L17 0V8H8ZM0 9H7V15.500L0 14.500ZM8 9H17V17L8 15.700Z" fill="#fff" /></Svg>
        </Task>
        <Task label="검색" $width={59}>
          <Svg w={22} h={22}><circle cx="14" cy="8" r="6.300" stroke="#fff" strokeWidth="1.400" /><path d="M9.500 12.500L1.500 20.500" stroke="#fff" strokeWidth="1.600" /></Svg>
        </Task>
        <Task label="작업 보기" $width={59}>
          <Svg w={24} h={20}><path d="M4.500 1.500H19.500V18.500H4.500ZM3 4.500H.700V15.500H3M21 4.500H23.300V15.500H21" stroke="#fff" strokeWidth="1.300" /></Svg>
        </Task>
        <Task label="파일 탐색기" $gap={2} $running>
          <Svg w={26} h={22}><path d="M0 1H11L13 3H26V21H0Z" fill="#e9b93c" /><path d="M0 5H26V21H0Z" fill="#fde28c" /><path d="M5 12H22V22H18V17H9V22H5Z" fill="#35a7dd" /><path d="M2 2.500H7" stroke="#fff3c4" strokeWidth="1.500" /></Svg>
        </Task>
        <Task label="Chrome">
          <Svg w={28} h={28}>
            <circle cx="14" cy="14" r="13" fill="#fbc93b" />
            <path d="M2.740 7.500A13 13 0 0 1 25.260 7.500H14A6.500 6.500 0 0 0 8.370 17.250Z" fill="#dc4a3e" />
            <path d="M2.740 7.500A13 13 0 0 0 14 27L19.630 17.250A6.500 6.500 0 0 1 8.370 17.250Z" fill="#1fa15d" />
            <circle cx="14" cy="14" r="6.300" fill="#fff" /><circle cx="14" cy="14" r="5" fill="#4384f3" />
          </Svg>
        </Task>
        <Task label="V3" $running>
          <Svg w={12} h={24}>
            <path d="M10.500 1Q11 6 7 9Q3 12 2.500 18Q-.500 13 3 9Q6 6 10.500 1Z" fill="#bb1a24" />
            <path d="M10.500 8Q11 13 7.500 15Q4 17 3 22.500Q1 18 4 14.500Q6 12 10.500 8Z" fill="#a5121d" />
          </Svg>
        </Task>
        <Task label="카카오톡" $alert>
          <Svg w={29} h={29}>
            <rect width="29" height="29" rx="1.500" fill="#fbe300" />
            <ellipse cx="14.500" cy="13" rx="11" ry="8.500" fill="#3b1e1e" /><path d="M9 18L8 25L15 20Z" fill="#3b1e1e" />
            <text x="14.500" y="16" textAnchor="middle" fontFamily="Roboto, sans-serif" fontSize="8" fontWeight="900" fill="#fbe300">TALK</text>
          </Svg>
        </Task>
        <Task label="설정" $running>
          <Svg w={24} h={24}>
            <circle cx="12" cy="12" r="6.800" stroke="#fff" strokeWidth="3" />
            <circle cx="12" cy="12" r="9.300" stroke="#fff" strokeWidth="3" strokeDasharray="3.700 3.604" strokeDashoffset="1.850" />
          </Svg>
        </Task>
        <Task label="AutoCAD" $running>
          <Svg w={29} h={29}>
            <rect width="29" height="29" fill="#fbe9e4" /><path d="M0 8L12 4V20L0 27Z" fill="#f6d5cd" />
            <path d="M11.500 3H18L25 24.500H19.500L17.500 19H12L10 24.500H4.500Z" fill="url(#red)" /><path d="M14.700 8.500L16.500 14.500L12.500 16Z" fill="#fbe9e4" /><path d="M5 24L18 16L12 3" stroke="#9b1519" />
          </Svg>
        </Task>
        <Task label="Illustrator" $running>
          <Svg w={27} h={28}>
            <rect x="1" y="1" width="25" height="24" fill="#261300" stroke="#f47c0f" strokeWidth="2" />
            <text x="13.500" y="18.500" textAnchor="middle" fontFamily="Open Sans, sans-serif" fontSize="16" fontWeight="700" fill="#ff7c0a">Ai</text>
          </Svg>
        </Task>
      </Taskbar>
    </App>
  );
}
